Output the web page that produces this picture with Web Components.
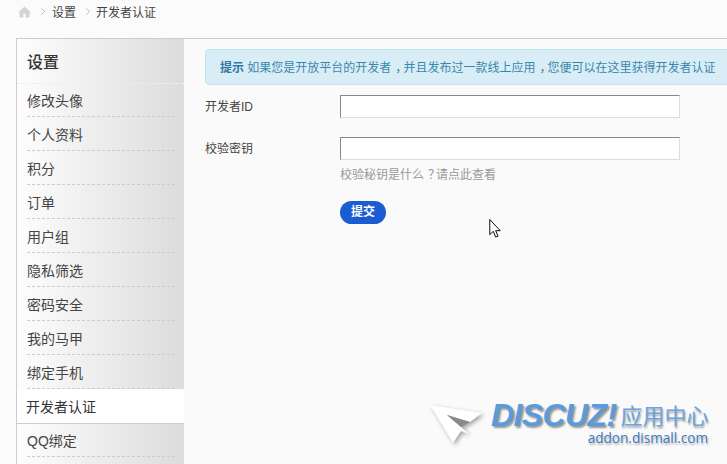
<!DOCTYPE html>
<html lang="zh">
<head>
<meta charset="utf-8">
<title>开发者认证</title>
<style>
html, body {
  margin: 0;
  height: 464px;
  overflow: hidden;
  background: #fbfbfb;
  font: 12px "Liberation Sans", "Noto Sans CJK SC", sans-serif;
  color: #444;
}
body { position: relative; }
/* the punctuation sits centred in the reference */
i { font-style: normal; padding-left: 4px; letter-spacing: -4px; }
</style>
</head>
<body>
<crumb-bar>
  <span slot="a">设置</span>
  <span slot="b">开发者认证</span>
</crumb-bar>

<settings-panel>
  <side-nav slot="side" heading="设置">
    <nav-item>修改头像</nav-item>
    <nav-item>个人资料</nav-item>
    <nav-item>积分</nav-item>
    <nav-item>订单</nav-item>
    <nav-item>用户组</nav-item>
    <nav-item>隐私筛选</nav-item>
    <nav-item>密码安全</nav-item>
    <nav-item>我的马甲</nav-item>
    <nav-item>绑定手机</nav-item>
    <nav-item active>开发者认证</nav-item>
    <nav-item>QQ绑定</nav-item>
  </side-nav>
  <tip-box><b>提示</b> 如果您是开放平台的开发者<i>，</i>并且发布过一款线上应用<i>，</i>您便可以在这里获得开发者认证</tip-box>
  <form-row label="开发者ID"></form-row>
  <form-row label="校验密钥"><span>校验秘钥是什么<i>？</i>请点此查看</span></form-row>
  <pill-button>提交</pill-button>
</settings-panel>

<mouse-cursor></mouse-cursor>
<addon-mark></addon-mark>

<script>
// small helper, every element gets the same open shadow setup
function shadow(el, html) {
  el.attachShadow({ mode: 'open' }).innerHTML = html;
}

class CrumbBar extends HTMLElement {
  constructor() {
    super();
    shadow(this, `
<style>
:host { display: block; height: 38px; }
.bar { display: flex; align-items: center; height: 23px; padding-left: 18px; }
svg { display: block; flex: none; }
.home { margin-right: 10px; }
.sep { margin-right: 7px; }
.sep.two { margin-left: 10px; margin-right: 6px; }
</style>
<div class="bar">
  <svg class="home" width="13" height="12" viewBox="0 0 14 12"><path d="M7 0 14 6.5H12.3V12H8.4V8H5.6V12H1.7V6.5H0Z" fill="#d4d4d4"/></svg>
  <svg class="sep" width="4" height="7" viewBox="0 0 4 7"><path d="M.5.5 3.5 3.5.5 6.5" fill="none" stroke="#bbb"/></svg>
  <slot name="a"></slot>
  <svg class="sep two" width="4" height="7" viewBox="0 0 4 7"><path d="M.5.5 3.5 3.5.5 6.5" fill="none" stroke="#bbb"/></svg>
  <slot name="b"></slot>
</div>`);
  }
}

class SettingsPanel extends HTMLElement {
  constructor() {
    super();
    shadow(this, `
<style>
:host { display: block; width: 800px; margin-left: 16px; }
.box {
  display: flex;
  height: 426px;
  border-top: 1px solid #ccc;
  border-left: 1px solid #ccc;
  background: #fafafa;
}
.main { flex: 1; padding: 10px 0 0 21px; }
</style>
<div class="box">
  <slot name="side"></slot>
  <div class="main"><slot></slot></div>
</div>`);
  }
}

class SideNav extends HTMLElement {
  constructor() {
    super();
    shadow(this, `
<style>
:host {
  display: block;
  flex: none;
  width: 167px;
  background: linear-gradient(to right, #fdfdfd, #dcdcdc);
}
h2 {
  margin: 0;
  height: 45px;
  box-sizing: border-box;
  padding: 14px 0 0 10px;
  font-size: 16px;
  line-height: 20px;
  font-weight: 500;
  color: #333;
  border-bottom: 1px dashed #eee;
}
</style>
<h2></h2>
<slot></slot>`);
    this.shadowRoot.querySelector('h2').textContent = this.getAttribute('heading');
  }
}

class NavItem extends HTMLElement {
  constructor() {
    super();
    shadow(this, `
<style>
:host { display: block; height: 34px; padding: 0 9px 0 10px; font-size: 14px; }
div {
  height: 33px;
  box-sizing: border-box;
  padding-top: 1px;
  line-height: 33px;
  color: #444;
  border-bottom: 1px dashed #ccc;
}
:host([active]) {
  margin-top: -1px;
  height: 35px;
  padding: 0 0 0 9px;
  background: #fff;
  border-bottom: 1px solid #ccc;
  box-sizing: border-box;
  position: relative;
}
:host([active]) div { border: 0; height: 34px; line-height: 34px; color: #333; }
</style>
<div><slot></slot></div>`);
  }
}

class TipBox extends HTMLElement {
  constructor() {
    super();
    shadow(this, `
<style>
:host {
  display: block;
  height: 36px;
  box-sizing: border-box;
  padding-left: 14px;
  line-height: 36px;
  white-space: nowrap;
  font-size: 12px;
  color: #3a87ad;
  background: #d9edf7;
  border: 1px solid #bce8f1;
  border-radius: 4px 0 0 4px;
}
::slotted(b) { color: #2f7ba3; }
</style>
<slot></slot>`);
  }
}

class FormRow extends HTMLElement {
  constructor() {
    super();
    shadow(this, `
<style>
:host {
  display: grid;
  grid-template-columns: 135px 340px;
  margin-top: 10px;
  margin-bottom: 19px;
  font-size: 12px;
  color: #444;
}
label { padding-top: 2px; line-height: 21px; }
input {
  display: block;
  width: 340px;
  height: 23px;
  box-sizing: border-box;
  margin: 0;
  padding: 0 4px;
  background: #fff;
  border: 1px solid;
  border-color: #888 #ddd #ddd #888;
  outline: 0;
}
.hint { line-height: 14px; color: #999; }
::slotted(span) { display: block; margin-top: 8px; }
</style>
<label></label>
<div><input type="text"><div class="hint"><slot></slot></div></div>`);
    this.shadowRoot.querySelector('label').textContent = this.getAttribute('label');
  }
}

class PillButton extends HTMLElement {
  constructor() {
    super();
    shadow(this, `
<style>
:host {
  display: block;
  width: 46px;
  height: 23px;
  margin: 19px 0 0 135px;
  border-radius: 12px;
  background: #1a5cd2;
  color: #fff;
  font-size: 12px;
  font-weight: 700;
  line-height: 23px;
  text-align: center;
}
</style>
<slot></slot>`);
  }
}

// the screenshot caught the pointer, it lies over the form
class MouseCursor extends HTMLElement {
  constructor() {
    super();
    shadow(this, `
<style>
:host { position: absolute; left: 489px; top: 219px; width: 12px; height: 19px; }
svg { display: block; }
</style>
<svg width="12" height="19" viewBox="0 0 12 20"><path d="M.5.5V16.5L4.2 13 6.7 19 9.2 18 6.7 12.3H11.5Z" fill="#fff" stroke="#000"/></svg>`);
  }
}

// watermark in the corner, over the page
class AddonMark extends HTMLElement {
  constructor() {
    super();
    shadow(this, `
<style>
:host { position: absolute; left: 430px; top: 400px; width: 290px; height: 50px; }
svg { position: absolute; left: 0; top: 5px; filter: drop-shadow(2px 2px 2px rgba(0,0,0,.35)); }
.top { position: absolute; left: 61px; top: 2px; display: flex; align-items: flex-start; white-space: nowrap; height: 27px; }
.brand {
  font: italic 700 32px/27px "Liberation Sans", sans-serif;
  letter-spacing: -.6px;
  color: #5b9bdc;
  text-shadow: 2px 2px 2px rgba(0,0,0,.4);
}
.cn {
  margin-left: 4px;
  font: 400 22px/24px "Noto Sans CJK SC", sans-serif;
  color: #6aa5e0;
  text-shadow: 1px 2px 2px rgba(0,0,0,.35);
}
.url {
  position: absolute;
  right: 12px;
  top: 30px;
  font: 400 13.6px/16px "Open Sans", sans-serif;
  color: #3f7cc4;
  text-shadow: 1px 2px 2px rgba(0,0,0,.3);
}
</style>
<svg width="56" height="44" viewBox="0 0 56 44">
  <path d="M0 0 52 8 40 17 17 10 31 22 39 29 31 26 23 38Z" fill="#fff"/>
  <path d="M17 10 40 17 31 22Z" fill="#8a8a8a"/>
</svg>
<div class="top"><span class="brand">DISCUZ!</span><span class="cn">应用中心</span></div>
<div class="url">addon.dismall.com</div>`);
  }
}

customElements.define('crumb-bar', CrumbBar);
customElements.define('settings-panel', SettingsPanel);
customElements.define('side-nav', SideNav);
customElements.define('nav-item', NavItem);
customElements.define('tip-box', TipBox);
customElements.define('form-row', FormRow);
customElements.define('pill-button', PillButton);
customElements.define('mouse-cursor', MouseCursor);
customElements.define('addon-mark', AddonMark);
</script>
</body>
</html>
